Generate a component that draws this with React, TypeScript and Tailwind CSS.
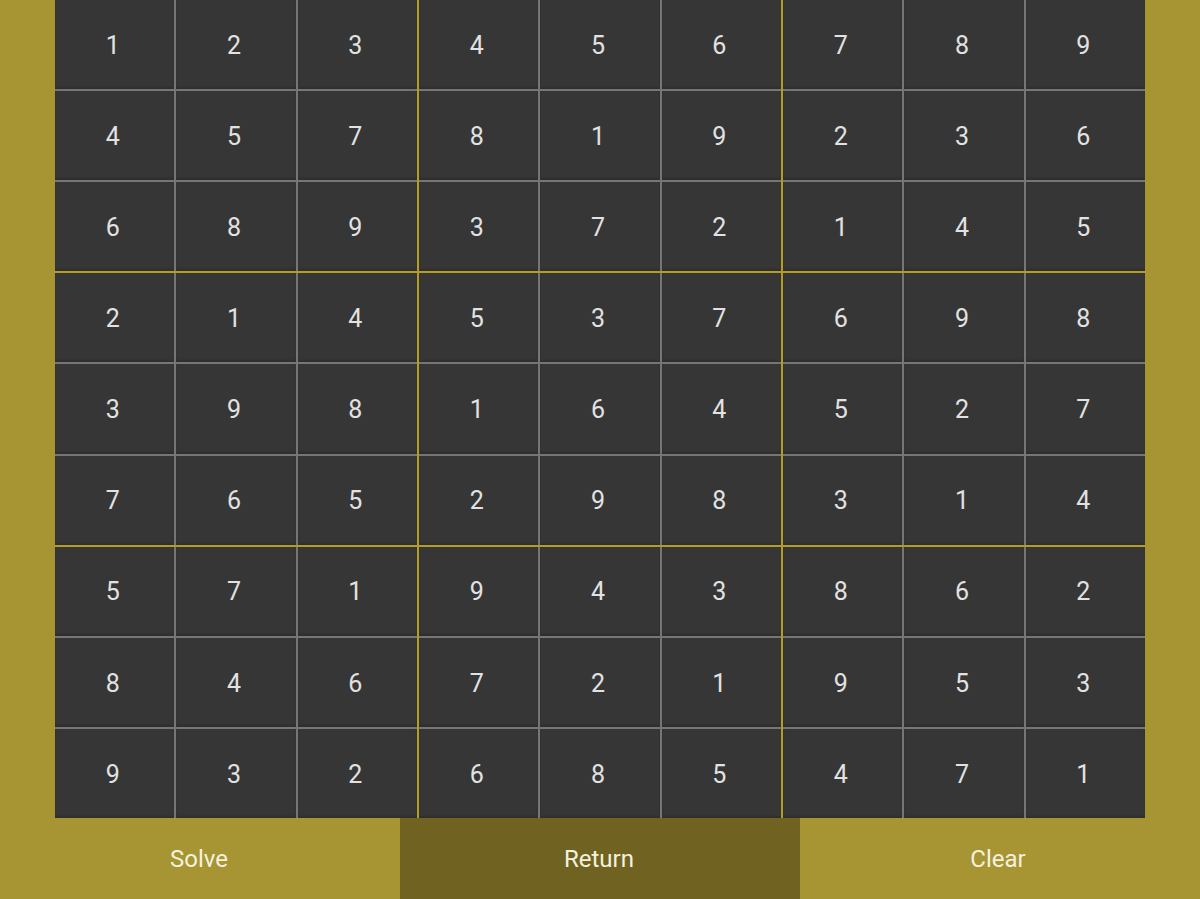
import React from 'react';

const board = [
  [1, 2, 3, 4, 5, 6, 7, 8, 9],
  [4, 5, 7, 8, 1, 9, 2, 3, 6],
  [6, 8, 9, 3, 7, 2, 1, 4, 5],
  [2, 1, 4, 5, 3, 7, 6, 9, 8],
  [3, 9, 8, 1, 6, 4, 5, 2, 7],
  [7, 6, 5, 2, 9, 8, 3, 1, 4],
  [5, 7, 1, 9, 4, 3, 8, 6, 2],
  [8, 4, 6, 7, 2, 1, 9, 5, 3],
  [9, 3, 2, 6, 8, 5, 4, 7, 1],
];

const boxes = [0, 1, 2, 3, 4, 5, 6, 7, 8];

const App = () => {
  return (
    <div className="w-[1200px] h-[899px] flex flex-col bg-[#a69532] font-['Roboto',sans-serif]">
      <div className="h-[818px] px-[55px]">
        <div className="grid grid-cols-3 grid-rows-3 gap-[2px] h-full bg-[#b39d22]">
          {boxes.map((b) => {
            const br = Math.floor(b / 3) * 3;
            const bc = (b % 3) * 3;
            return (
              <div key={b} className="grid grid-cols-3 grid-rows-3 gap-[2px] bg-[#767676]">
                {boxes.map((c) => {
                  const v = board[br + Math.floor(c / 3)][bc + (c % 3)];
                  return (
                    <div
                      key={c}
                      className="flex items-center justify-center pr-[4px] pt-[2px] bg-[#363636] text-[25px] text-[#e2e2e2] shadow-[inset_0_-2px_2px_rgba(0,0,0,0.15)]"
                    >
                      {v}
                    </div>
                  );
                })}
              </div>
            );
          })}
        </div>
      </div>
      <div className="flex-1 grid grid-cols-3 text-[24px] text-[#f4f1df]">
        <button className="flex items-center justify-center pr-[2px]">Solve</button>
        <button className="flex items-center justify-center pr-[2px] bg-[#706322]">Return</button>
        <button className="flex items-center justify-center pr-[4px]">Clear</button>
      </div>
    </div>
  );
};

export default App;
